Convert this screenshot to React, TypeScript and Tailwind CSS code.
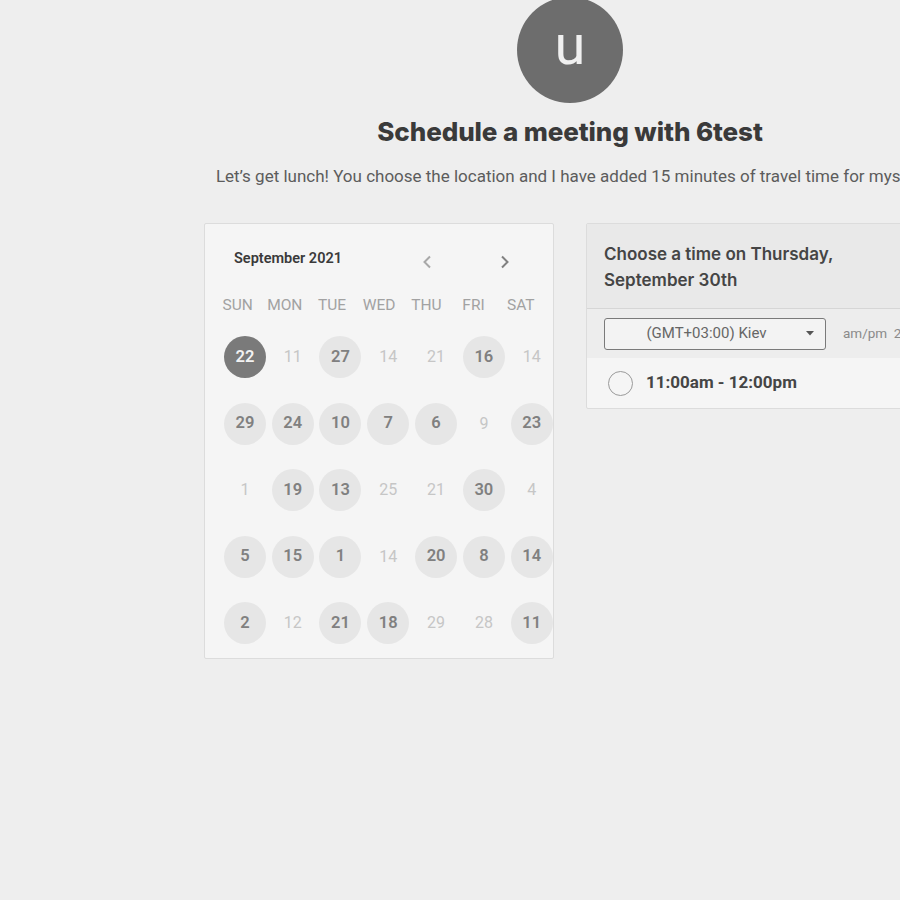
const weekdays = ["SUN", "MON", "TUE", "WED", "THU", "FRI", "SAT"];

// [day, kind]  kind: "sel" selected, "on" available, "off" unavailable
type Cell = [number, "sel" | "on" | "off"];

const rows: Cell[][] = [
    [[22, "sel"], [11, "off"], [27, "on"], [14, "off"], [21, "off"], [16, "on"], [14, "off"]],
    [[29, "on"], [24, "on"], [10, "on"], [7, "on"], [6, "on"], [9, "off"], [23, "on"]],
    [[1, "off"], [19, "on"], [13, "on"], [25, "off"], [21, "off"], [30, "on"], [4, "off"]],
    [[5, "on"], [15, "on"], [1, "on"], [14, "off"], [20, "on"], [8, "on"], [14, "on"]],
    [[2, "on"], [12, "off"], [21, "on"], [18, "on"], [29, "off"], [28, "off"], [11, "on"]],
];

function DayCell({ day, kind }: { day: number; kind: Cell[1] }) {
    if (kind === "off") {
        return (
            <div className="flex items-center justify-center h-[66.5px]">
                <span className="text-[16px] text-[#c6c6c6]">{day}</span>
            </div>
        );
    }
    return (
        <div className="flex items-center justify-center h-[66.5px]">
            <div
                className={
                    kind === "sel"
                        ? "w-[42px] h-[42px] rounded-full bg-[#7a7a7a] text-[#f2f2f2] flex items-center justify-center text-[16.5px] font-semibold"
                        : "w-[42px] h-[42px] rounded-full bg-[#e6e6e6] text-[#808080] flex items-center justify-center text-[16.5px] font-semibold"
                }
            >
                {day}
            </div>
        </div>
    );
}

function Calendar() {
    return (
        <div className="w-[350px] h-[436px] shrink-0 bg-[#f5f5f5] border border-[#dcdcdc] rounded-[2px] overflow-hidden">
            <div className="flex items-center h-[67px] pl-[29px] pt-[2px]">
                <span className="text-[14.5px] font-semibold text-[#3a3a3a] w-[180px]">September 2021</span>
                <button className="w-[20px] ml-[3px] mt-[6px] flex justify-center text-[#a8a8a8]">
                    <svg width="10" height="14" viewBox="0 0 10 14" fill="none" stroke="currentColor" strokeWidth="2">
                        <path d="M8 1.5 2.5 7 8 12.5" />
                    </svg>
                </button>
                <button className="w-[20px] ml-[58px] mt-[6px] flex justify-center text-[#808080]">
                    <svg width="10" height="14" viewBox="0 0 10 14" fill="none" stroke="currentColor" strokeWidth="2">
                        <path d="M2 1.5 7.5 7 2 12.5" />
                    </svg>
                </button>
            </div>
            <div className="grid grid-cols-[repeat(7,47.2px)] ml-[9px] h-[30px] items-center">
                {weekdays.map((w) => (
                    <div key={w} className="text-center text-[15.5px] text-[#a2a2a2]">
                        {w}
                    </div>
                ))}
            </div>
            <div className="grid grid-cols-[repeat(7,47.8px)] ml-[16px] mt-[3px]">
                {rows.flat().map(([d, k], i) => (
                    <DayCell key={i} day={d} kind={k} />
                ))}
            </div>
        </div>
    );
}

function TimePanel() {
    return (
        <div className="w-[350px] shrink-0 bg-[#f5f5f5] border border-[#dcdcdc] rounded-[2px] self-start">
            <div className="h-[85px] bg-[#e9e9e9] border-b border-[#d6d6d6] px-[17px] pt-[17px]">
                <p className="text-[17px] leading-[26px] font-semibold text-[#454545] font-['Inter',sans-serif]">
                    Choose a time on Thursday,
                    <br />
                    September 30th
                </p>
            </div>
            <div className="h-[49px] bg-[#ededed] flex items-center pl-[17px]">
                <div className="w-[222px] h-[32px] border border-[#7a7a7a] rounded-[3px] bg-[#f3f3f3] flex items-center">
                    <span className="flex-1 text-center pl-[2px] text-[15px] text-[#666666]">(GMT+03:00) Kiev</span>
                    <svg width="8" height="5" viewBox="0 0 8 5" className="mr-[11px]">
                        <path d="M0 0h8L4 4.5z" fill="#555555" />
                    </svg>
                </div>
                <span className="ml-[17px] text-[13.5px] text-[#8a8a8a] whitespace-nowrap">am/pm&nbsp;&nbsp;24h</span>
            </div>
            <div className="h-[50px] flex items-center pl-[21px]">
                <div className="w-[25px] h-[25px] rounded-full border-[1.5px] border-[#9a9a9a]" />
                <span className="ml-[13px] text-[17px] font-bold text-[#454545]">11:00am - 12:00pm</span>
            </div>
        </div>
    );
}

export default function App() {
    return (
        <div className="w-[900px] h-[900px] overflow-hidden bg-[#eeeeee] font-['Roboto',sans-serif]">
            <div className="w-[1140px] flex flex-col items-center">
                <div className="w-[106px] h-[106px] mt-[-3px] rounded-full bg-[#6d6d6d] flex items-center justify-center">
                    <span className="text-[56px] leading-none text-[#f0f0f0] mt-[-10px]">u</span>
                </div>
                <h1 className="mt-[13px] text-[26px] leading-[32px] font-extrabold text-[#3a3a3a] font-['Inter',sans-serif] tracking-[-0.1px]">
                    Schedule a meeting with 6test
                </h1>
                <p className="mt-[17px] text-[17px] leading-[22px] text-[#5c5c5c] whitespace-nowrap">
                    Let’s get lunch! You choose the location and I have added 15 minutes of travel time for myself.
                </p>
                <div className="flex gap-[32px] mt-[36px]">
                    <Calendar />
                    <TimePanel />
                </div>
            </div>
        </div>
    );
}
